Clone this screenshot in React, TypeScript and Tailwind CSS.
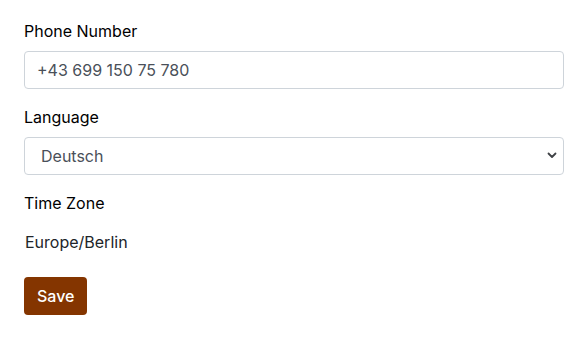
import React, { useState } from 'react';

export default function App() {
  const [phone, setPhone] = useState('+43 699 150 75 780');
  const [lang, setLang] = useState('de');

  return (
    <div className="min-h-screen bg-white px-6 pt-[19px] text-[16px] leading-6 text-[#212529]" style={{ fontFamily: 'Inter, "Liberation Sans", sans-serif' }}>
      <form className="w-[540px]" onSubmit={(e) => e.preventDefault()}>
        <div className="mb-4">
          <label className="mb-2 block text-black">Phone Number</label>
          <input
            value={phone}
            onChange={(e) => setPhone(e.target.value)}
            className="block h-[38px] w-full rounded-[4px] border border-[#ced4da] px-3 text-[#4a5059] outline-none"
          />
        </div>

        <div className="mb-4">
          <label className="mb-2 block text-black">Language</label>
          <div className="relative">
            <select
              value={lang}
              onChange={(e) => setLang(e.target.value)}
              className="block h-[38px] w-full appearance-none rounded-[4px] border border-[#ced4da] bg-white pl-4 pr-8 text-[#4a5059] outline-none"
            >
              <option value="de">Deutsch</option>
              <option value="en">English</option>
            </select>
            <svg className="pointer-events-none absolute right-[7px] top-[15px]" width="10" height="7" viewBox="0 0 10 7" fill="none">
              <path d="M1.5 1.5 L5 5 L8.5 1.5" stroke="#3f4246" strokeWidth="1.8" strokeLinecap="round" strokeLinejoin="round" />
            </svg>
          </div>
        </div>

        <div className="mb-4">
          <label className="mb-2 block text-black">Time Zone</label>
          <div className="border border-transparent py-[6px]">Europe/Berlin</div>
        </div>

        <button type="submit" className="h-[38px] rounded-[4px] bg-[#843500] px-[13px] font-medium text-white">
          Save
        </button>
      </form>
    </div>
  );
}
